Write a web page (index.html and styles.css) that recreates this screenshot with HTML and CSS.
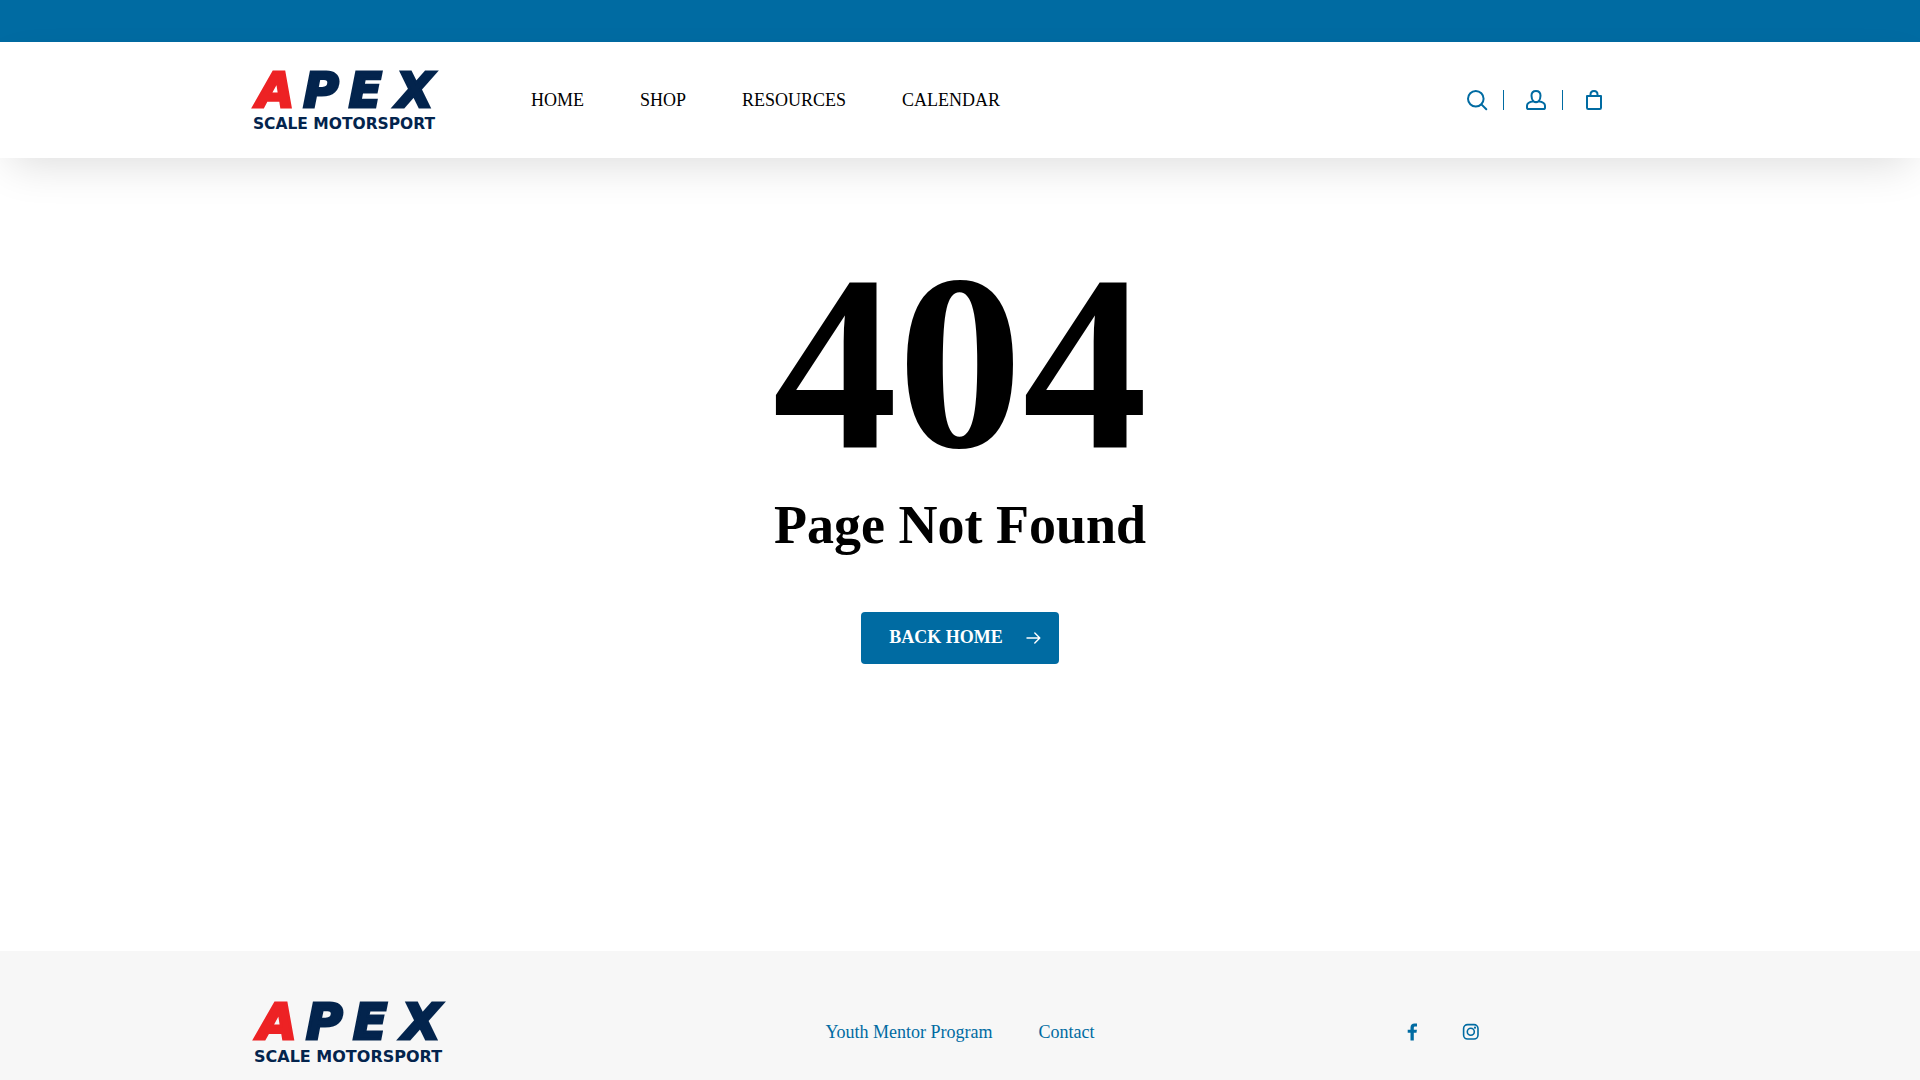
FILE: index.html
```html
<!DOCTYPE html>
<html lang="en">
<head>
<meta charset="utf-8">
<meta name="viewport" content="width=device-width, initial-scale=1">
<title>Page Not Found - Apex Scale Motorsport</title>
<link rel="stylesheet" href="styles.css">
</head>
<body>
<div class="topbar"></div>
<header class="header">
  <div class="container header-row">
    <a class="logo" href="#" aria-label="Apex Scale Motorsport">
      <svg viewBox="0 0 197 64" role="img" aria-hidden="true">
        <text class="logo-name" y="39"><tspan class="logo-red" x="7">A</tspan><tspan x="55">P</tspan><tspan x="102">E</tspan><tspan x="151">X</tspan></text>
        <text class="logo-sub" x="3" y="62">SCALE MOTORSPORT</text>
      </svg>
    </a>
    <nav class="main-nav">
      <a href="#">HOME</a>
      <a href="#">SHOP</a>
      <a href="#">RESOURCES</a>
      <a href="#">CALENDAR</a>
    </nav>
    <div class="tools">
      <a href="#" aria-label="Search"><svg viewBox="0 0 20 20"><circle cx="8.8" cy="8.8" r="7.8"/><path d="M14.4 14.4 19.3 19.3"/></svg></a>
      <a href="#" aria-label="Account"><svg viewBox="0 0 20 20"><path d="M10 1c-2.900 0-4.500 2-4.500 4.700 0 2.300.9 4.600 2 5.600C4 11.900 1 13.200 1 15.800v1.600c0 1 .7 1.600 1.700 1.600h14.600c1 0 1.700-.6 1.700-1.600v-1.600c0-2.600-3-3.900-6.500-4.500 1.100-1 2-3.300 2-5.600C14.500 3 12.900 1 10 1zM7.500 11.300c1.500 1 3.500 1 5 0"/></svg></a>
      <a href="#" aria-label="Cart"><svg viewBox="0 0 20 20"><path d="M2 6h14v11.700c0 .8-.5 1.300-1.300 1.300H3.300c-.8 0-1.300-.5-1.300-1.300zM5.500 5.600V4.500C5.500 2.500 7 1 9 1s3.500 1.500 3.500 3.500v1.100"/></svg></a>
    </div>
  </div>
</header>
<main class="error">
  <h1>404</h1>
  <h2>Page Not Found</h2>
  <a class="button" href="#">BACK HOME
    <svg viewBox="0 0 16 16" aria-hidden="true"><path d="M1 9h12.500M8.800 4l5 5-5 5"/></svg>
  </a>
</main>
<footer class="footer">
  <div class="container footer-row">
    <a class="logo logo-footer" href="#" aria-label="Apex Scale Motorsport">
      <svg viewBox="0 0 197 64" role="img" aria-hidden="true">
        <text class="logo-name" y="39"><tspan class="logo-red" x="7">A</tspan><tspan x="55">P</tspan><tspan x="102">E</tspan><tspan x="151">X</tspan></text>
        <text class="logo-sub" x="3" y="62">SCALE MOTORSPORT</text>
      </svg>
    </a>
    <nav class="footer-nav">
      <a href="#">Youth Mentor Program</a>
      <a href="#">Contact</a>
    </nav>
    <div class="social">
      <a href="#" aria-label="Facebook"><svg viewBox="0 0 18 18"><path class="solid" d="M14 .6v2.900h-1.700c-1.300 0-1.500.6-1.500 1.500v1.700h3.100l-.4 3.100h-2.700v7.700H7.500V9.800H4.700V6.700h2.800V4.400C7.500 1.800 9.100.4 11.500.4c1.100 0 2.200.1 2.500.2z"/></svg></a>
      <a href="#" aria-label="Instagram"><svg viewBox="0 0 18 18"><rect x="1.600" y="1.600" width="14.400" height="14.400" rx="4"/><circle cx="8.800" cy="8.800" r="3.500"/><circle class="solid" cx="13" cy="4.700" r="1.100"/></svg></a>
    </div>
  </div>
</footer>
</body>
</html>
```
FILE: styles.css
```css
* {
  box-sizing: border-box;
}

body {
  margin: 0;
  min-height: 100vh;
  display: flex;
  flex-direction: column;
  background: #fff;
  color: #000;
  font: 18px/24px "Liberation Serif", "Times New Roman", serif;
}

a {
  color: #006ba2;
  text-decoration: none;
}

svg {
  display: block;
  overflow: visible;
  fill: none;
  stroke: #006ba2;
  stroke-width: 2;
  stroke-linecap: round;
  stroke-linejoin: round;
}

.container {
  width: 100%;
  max-width: 1420px;
  margin: 0 auto;
}

.topbar {
  height: 42px;
  background: #006ba2;
}

.header {
  padding: 27px 0;
  background: #fff;
  box-shadow: 0 16px 44px -10px rgba(0, 0, 0, 0.14);
}

.header-row {
  display: flex;
  align-items: center;
  padding-right: 65px;
}

.logo {
  width: 191px;
}

.logo-footer {
  width: 197px;
  margin-left: 1px;
}

.logo-name,
.logo-sub {
  font-family: "DejaVu Sans", sans-serif;
  font-weight: bold;
  fill: #03244d;
  stroke: none;
}

.logo-name {
  font-size: 50px;
  font-style: italic;
  stroke: #03244d;
  stroke-width: 3;
  stroke-linejoin: miter;
}

.logo-red {
  fill: #ed2224;
  stroke: #ed2224;
}

.logo-sub {
  font-size: 16px;
}

.main-nav {
  display: flex;
  gap: 56px;
  margin-left: 90px;
}

.main-nav a {
  color: #000;
}

.tools {
  display: flex;
  margin-left: auto;
}

.tools a + a {
  margin-left: 16px;
  padding-left: 22px;
  border-left: 1px solid #006ba2;
}

.tools svg {
  width: 20px;
  height: 20px;
}

.error {
  flex: 1;
  display: flex;
  flex-direction: column;
  align-items: center;
  padding: 80px 0;
}

h1 {
  margin: 0;
  font-size: 250px;
  line-height: 250px;
}

h2 {
  margin: 0 0 50px;
  font-size: 54px;
  line-height: 74px;
}

.button {
  display: flex;
  align-items: center;
  gap: 23px;
  padding: 13px 17px 15px 28px;
  border-radius: 4px;
  background: #006ba2;
  color: #fff;
  font-weight: bold;
}

.button svg {
  width: 16px;
  height: 16px;
  stroke: #fff;
  stroke-width: 1.4;
}

.footer {
  padding: 49px 0 16px;
  background: #f7f7f7;
}

.footer-row {
  display: grid;
  grid-template-columns: 1fr auto 1fr;
  align-items: center;
}

.footer-nav {
  display: flex;
  gap: 46px;
}

.social {
  display: flex;
  justify-content: flex-end;
  gap: 41px;
  padding-right: 190px;
}

.social svg {
  width: 18px;
  height: 18px;
  stroke-width: 1.6;
}

.social .solid {
  fill: #006ba2;
  stroke: none;
}
```
